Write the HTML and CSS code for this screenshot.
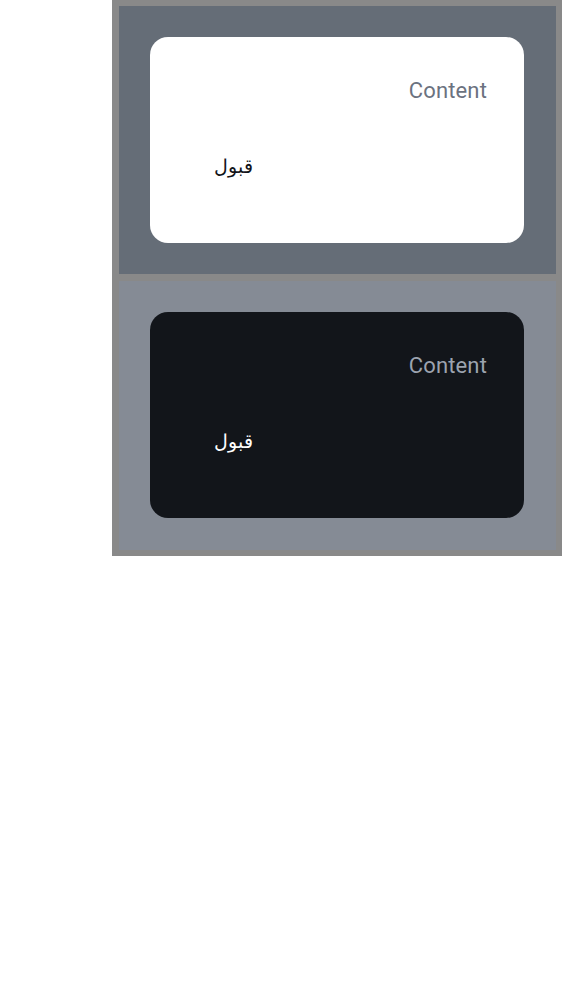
FILE: index.html
```html
<!DOCTYPE html>
<html lang="en">
<head>
<meta charset="utf-8">
<link rel="stylesheet" href="styles.css">
</head>
<body>
<div class="frame">
  <section class="panel panel-light">
    <div class="card card-light">
      <p class="content">Content</p>
      <div class="actions"><button class="btn" dir="rtl">قبول</button></div>
    </div>
  </section>
  <section class="panel panel-dark">
    <div class="card card-dark">
      <p class="content">Content</p>
      <div class="actions"><button class="btn" dir="rtl">قبول</button></div>
    </div>
  </section>
</div>
</body>
</html>
```
FILE: styles.css
```css
html, body {
  margin: 0;
  padding: 0;
  background: #ffffff;
}
body {
  font-family: Roboto, sans-serif;
}
.frame {
  margin-left: 112px;
  width: 450px;
  box-sizing: border-box;
  background: #898989;
  padding: 6px 6px 6px 7px;
  display: grid;
  gap: 7px;
}
.panel {
  padding: 31px 32px 31px 31px;
  box-sizing: border-box;
}
.panel-light {
  background: #656d77;
  height: 268px;
}
.panel-dark {
  background: #858b95;
  height: 269px;
}
.card {
  height: 206px;
  border-radius: 18px;
  box-sizing: border-box;
  padding: 41px 37px 0 37px;
}
.card-light {
  background: #ffffff;
}
.card-dark {
  background: #12151a;
}
.content {
  margin: 0;
  text-align: right;
  font-size: 22px;
  line-height: 26px;
  letter-spacing: 0.15px;
}
.card-light .content { color: #6b7280; }
.card-dark .content { color: #9ca3af; }
.actions {
  margin-top: 50px;
  display: flex;
}
.btn {
  background: transparent;
  border: 0;
  padding: 0;
  margin-left: 27px;
  font-family: Roboto, sans-serif;
  font-size: 19px;
  line-height: 26px;
}
.card-light .btn { color: #111318; }
.card-dark .btn { color: #ffffff; }
```
